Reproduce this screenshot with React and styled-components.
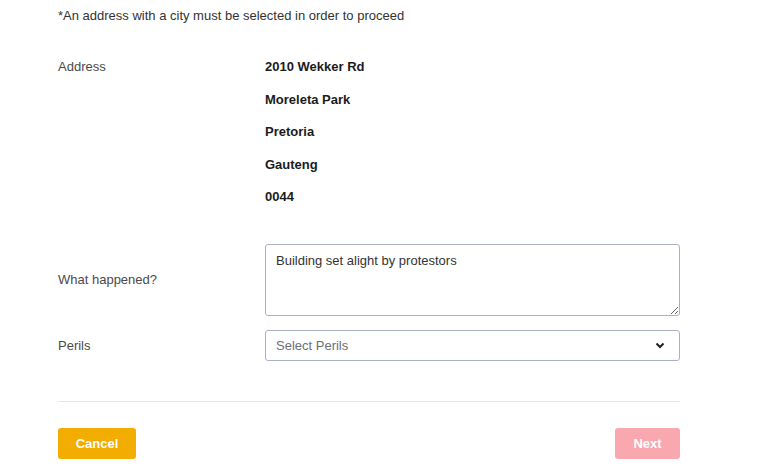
import React from "react";
import styled, { createGlobalStyle } from "styled-components";

const GlobalStyle = createGlobalStyle`
  body {
    margin: 0;
    background: #ffffff;
    font-family: "Liberation Sans", Arial, sans-serif;
  }
`;

const Page = styled.div`
  width: 622px;
  padding: 8px 0 0 58px;
`;

const Notice = styled.p`
  margin: 0;
  font-size: 13px;
  line-height: 16px;
  color: #333;
`;

const Row = styled.div`
  display: grid;
  grid-template-columns: 207px 1fr;
  align-items: ${(p) => (p.top ? "start" : "center")};
  margin-top: ${(p) => p.gap || 0}px;
`;

const Label = styled.span`
  font-size: 13px;
  line-height: 16px;
  color: #4a4a4a;
`;

const AddressLines = styled.div`
  display: flex;
  flex-direction: column;
  gap: 16.5px;
`;

const AddressLine = styled.span`
  font-size: 13px;
  line-height: 16px;
  font-weight: 700;
  color: #1b1b1b;
`;

const TextArea = styled.textarea`
  display: block;
  box-sizing: border-box;
  width: 415px;
  height: 72px;
  padding: 8px 10px;
  border: 1px solid #a9b1c4;
  border-radius: 3px;
  font-family: "Liberation Sans", Arial, sans-serif;
  font-size: 13px;
  line-height: 16px;
  color: #333;
  resize: vertical;
  outline: none;
`;

const Select = styled.div`
  box-sizing: border-box;
  width: 415px;
  height: 31px;
  padding: 0 14px 0 10px;
  border: 1px solid #a9b1c4;
  border-radius: 3px;
  display: flex;
  align-items: center;
  justify-content: space-between;
  font-size: 13px;
  color: #6b6f78;
`;

const Divider = styled.hr`
  margin: 40px 0 0;
  border: none;
  border-top: 1px solid #e6e6e6;
`;

const Actions = styled.div`
  display: flex;
  justify-content: space-between;
  margin-top: 26px;
`;

const Button = styled.button`
  height: 31px;
  width: ${(p) => p.w}px;
  padding: 0;
  border: none;
  border-radius: 3px;
  background: ${(p) => p.bg};
  color: #fff;
  font-family: "Liberation Sans", Arial, sans-serif;
  font-size: 13px;
  font-weight: 700;
`;

export default function App() {
  return (
    <>
      <GlobalStyle />
      <Page>
        <Notice>*An address with a city must be selected in order to proceed</Notice>
        <Row top gap={35}>
          <Label>Address</Label>
          <AddressLines>
            <AddressLine>2010 Wekker Rd</AddressLine>
            <AddressLine>Moreleta Park</AddressLine>
            <AddressLine>Pretoria</AddressLine>
            <AddressLine>Gauteng</AddressLine>
            <AddressLine>0044</AddressLine>
          </AddressLines>
        </Row>
        <Row gap={39}>
          <Label>What happened?</Label>
          <TextArea defaultValue="Building set alight by protestors" />
        </Row>
        <Row gap={14}>
          <Label>Perils</Label>
          <Select>
            <span>Select Perils</span>
            <svg width="10" height="7" viewBox="0 0 10 7">
              <path d="M1.5 1.5 L5 5 L8.5 1.5" fill="none" stroke="#222" strokeWidth="2" />
            </svg>
          </Select>
        </Row>
        <Divider />
        <Actions>
          <Button bg="#f2ad00" w={78}>Cancel</Button>
          <Button bg="#f8a8ae" w={65}>Next</Button>
        </Actions>
      </Page>
    </>
  );
}
